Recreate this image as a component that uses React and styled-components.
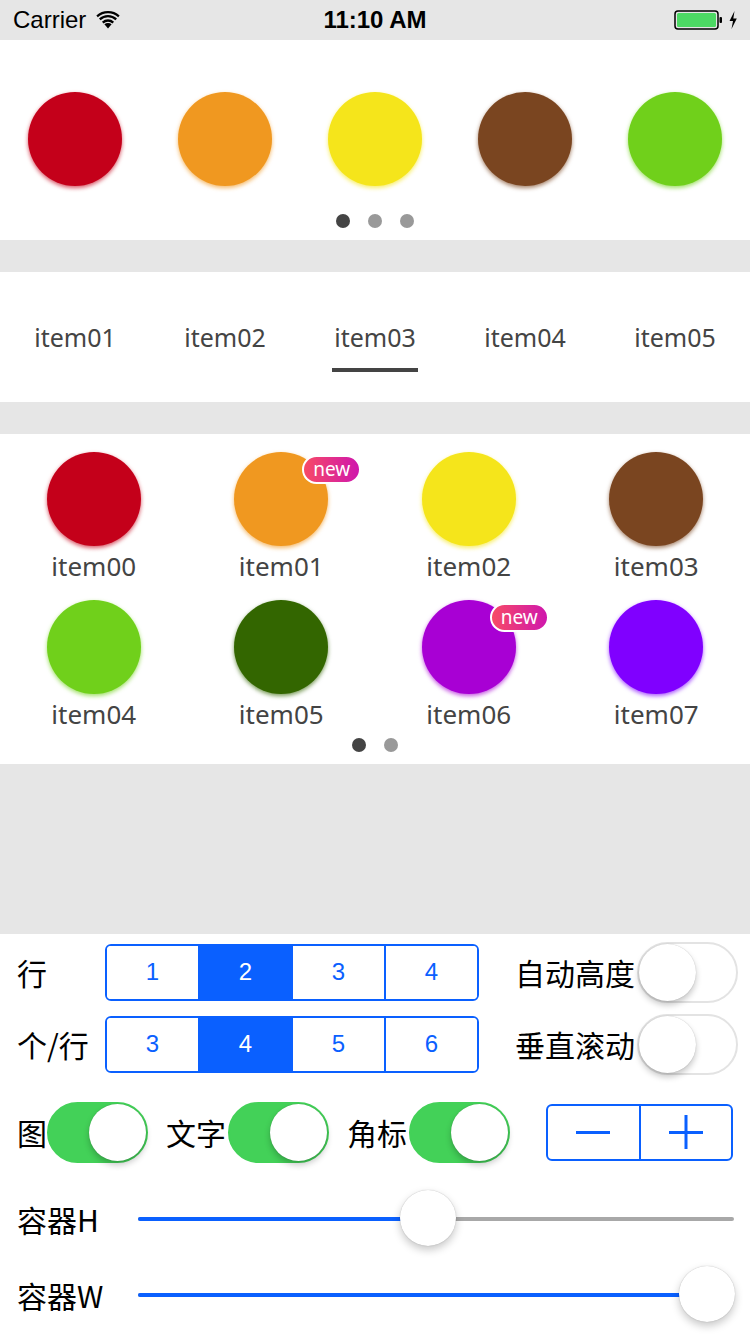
import React from "react";
import styled, { createGlobalStyle } from "styled-components";

const Global = createGlobalStyle`
  html, body { margin: 0; padding: 0; background: #e6e6e6; }
  body { font-family: "Noto Sans", "Noto Sans CJK SC", sans-serif; }
  * { box-sizing: border-box; }
`;

const Page = styled.div`
  width: 750px;
  height: 1334px;
  background: #e6e6e6;
  display: flex;
  flex-direction: column;
  overflow: hidden;
`;

const StatusBar = styled.div`
  height: 40px;
  display: flex;
  align-items: center;
  justify-content: space-between;
  padding: 0 12px 0 13px;
  position: relative;
  font-family: "Liberation Sans", "Noto Sans", sans-serif;
  font-size: 24px;
  color: #000;
`;
const Carrier = styled.div`
  display: flex;
  align-items: center;
  gap: 10px;
`;
const Clock = styled.div`
  position: absolute;
  left: 0;
  right: 0;
  text-align: center;
  font-weight: bold;
  pointer-events: none;
`;
const BatteryWrap = styled.div`
  display: flex;
  align-items: center;
  gap: 4px;
`;

const Section = styled.div`
  background: #fff;
  margin-top: ${(p) => p.$mt || 0}px;
  height: ${(p) => p.$h}px;
  display: flex;
  flex-direction: column;
`;

const BannerRow = styled.div`
  display: grid;
  grid-template-columns: repeat(5, 150px);
  padding-top: 52px;
  justify-items: center;
`;

const Ball = styled.div`
  width: 94px;
  height: 94px;
  border-radius: 50%;
  background: ${(p) => p.$c};
  box-shadow: 0 2px 4px ${(p) => p.$c}aa;
`;

const Dots = styled.div`
  display: flex;
  justify-content: center;
  gap: 18px;
  margin-top: ${(p) => p.$mt}px;
`;
const Dot = styled.span`
  width: 14px;
  height: 14px;
  border-radius: 50%;
  background: ${(p) => (p.$active ? "#444" : "#999")};
`;

const Tabs = styled.div`
  display: grid;
  grid-template-columns: repeat(5, 150px);
  height: 100%;
`;
const Tab = styled.div`
  position: relative;
  display: flex;
  align-items: center;
  justify-content: center;
  font-family: "Noto Sans", sans-serif;
  font-size: 25px;
  color: #444;
  &::after {
    content: "";
    display: ${(p) => (p.$active ? "block" : "none")};
    position: absolute;
    left: 32px;
    right: 32px;
    top: 96px;
    height: 4px;
    background: #444;
  }
`;

const Grid = styled.div`
  display: grid;
  grid-template-columns: repeat(4, 1fr);
  row-gap: 20px;
  padding-top: 18px;
`;
const Cell = styled.div`
  display: flex;
  flex-direction: column;
  align-items: center;
  position: relative;
`;
const Label = styled.div`
  margin-top: 6px;
  height: 28px;
  line-height: 28px;
  font-family: "Noto Sans", sans-serif;
  font-size: 26px;
  color: #444;
`;
const Badge = styled.div`
  position: absolute;
  top: 3px;
  left: calc(50% + 21px);
  height: 29px;
  padding: 0 9px;
  border: 2px solid #fff;
  border-radius: 15px;
  background: linear-gradient(90deg, #f74a66, #cf17ad);
  color: #fff;
  font-family: "Noto Sans", sans-serif;
  font-size: 19px;
  line-height: 24px;
`;

const Panel = styled.div`
  background: #fff;
  flex: 1;
  padding-top: 8px;
  display: flex;
  flex-direction: column;
`;
const Row = styled.div`
  display: flex;
  align-items: center;
  height: ${(p) => p.$h}px;
  margin-top: ${(p) => p.$mt || 0}px;
  padding-left: 17px;
`;
const CnLabel = styled.div`
  font-family: "Noto Sans CJK SC", sans-serif;
  font-size: 30px;
  color: #000;
  white-space: nowrap;
  width: ${(p) => (p.$w ? p.$w + "px" : "auto")};
  flex-shrink: 0;
  margin-right: ${(p) => p.$mr || 0}px;
`;
const Segmented = styled.div`
  display: flex;
  width: 374px;
  height: 57px;
  border: 2px solid #0a60ff;
  border-radius: 6px;
  overflow: hidden;
  margin-right: 36px;
`;
const Seg = styled.div`
  flex: 1;
  display: flex;
  align-items: center;
  justify-content: center;
  font-family: "Liberation Sans", sans-serif;
  font-size: 24px;
  color: ${(p) => (p.$on ? "#fff" : "#0a60ff")};
  background: ${(p) => (p.$on ? "#0a60ff" : "#fff")};
  & + & {
    border-left: 2px solid #0a60ff;
  }
`;

const SwitchTrack = styled.div`
  width: 101px;
  height: 61px;
  border-radius: 31px;
  flex-shrink: 0;
  position: relative;
  background: ${(p) => (p.$on ? "#43d158" : "#fff")};
  border: 2px solid ${(p) => (p.$on ? "#43d158" : "#e3e3e3")};
  margin-right: ${(p) => p.$mr || 0}px;
`;
const Knob = styled.div`
  position: absolute;
  top: 0;
  ${(p) => (p.$on ? "right: 0;" : "left: 0;")}
  width: 57px;
  height: 57px;
  border-radius: 50%;
  background: #fff;
  box-shadow: 0 4px 6px rgba(0, 0, 0, 0.22), 0 0 1px rgba(0, 0, 0, 0.25);
`;

const Stepper = styled.div`
  display: flex;
  width: 187px;
  height: 57px;
  border: 2px solid #0a60ff;
  border-radius: 6px;
  margin-left: 36px;
`;
const StepBtn = styled.div`
  flex: 1;
  display: flex;
  align-items: center;
  justify-content: center;
  & + & {
    border-left: 2px solid #0a60ff;
  }
`;

const SliderTrack = styled.div`
  position: relative;
  width: 596px;
  height: 4px;
  border-radius: 2px;
  background: #a8a8a8;
`;
const SliderFill = styled.div`
  position: absolute;
  left: 0;
  top: 0;
  bottom: 0;
  border-radius: 2px;
  background: #0a60ff;
`;
const Thumb = styled.div`
  position: absolute;
  top: -27px;
  width: 56px;
  height: 56px;
  margin-left: -28px;
  border-radius: 50%;
  background: #fff;
  box-shadow: 0 4px 8px rgba(0, 0, 0, 0.22), 0 0 1px rgba(0, 0, 0, 0.3);
`;

const Switch = ({ on, mr }) => (
  <SwitchTrack $on={on} $mr={mr}>
    <Knob $on={on} />
  </SwitchTrack>
);

const Slider = ({ value }) => (
  <SliderTrack>
    <SliderFill style={{ width: `${value * 100}%` }} />
    <Thumb style={{ left: `${value * 100}%` }} />
  </SliderTrack>
);

const banner = ["#c4001a", "#f09820", "#f5e51b", "#7a4520", "#70d01b"];
const items = [
  ["#c4001a", false],
  ["#f09820", true],
  ["#f5e51b", false],
  ["#7a4520", false],
  ["#70d01b", false],
  ["#336600", false],
  ["#a800d4", true],
  ["#8000ff", false],
];

export default function App() {
  return (
    <Page>
      <Global />
      <StatusBar>
        <Carrier>
          <span>Carrier</span>
          <svg width="24" height="18" viewBox="0 0 22 17">
            <path d="M11 16.5 L7.6 12.6 A5 5 0 0 1 14.4 12.6 Z" fill="#000" />
            <path d="M5.3 10.1 A8.4 8.4 0 0 1 16.7 10.1 L15.2 11.7 A6.2 6.2 0 0 0 6.8 11.7 Z" fill="#000" />
            <path d="M2.5 7.2 A12.4 12.4 0 0 1 19.5 7.2 L18 8.8 A10.2 10.2 0 0 0 4 8.8 Z" fill="#000" />
            <path d="M0 4.3 A16.4 16.4 0 0 1 22 4.3 L20.6 5.9 A14.2 14.2 0 0 0 1.4 5.9 Z" fill="#000" />
          </svg>
        </Carrier>
        <Clock>11:10 AM</Clock>
        <BatteryWrap>
          <svg width="50" height="20" viewBox="0 0 50 20">
            <rect x="1" y="1" width="43" height="18" rx="3" fill="none" stroke="#000" strokeWidth="1.5" />
            <rect x="3" y="3" width="39" height="14" rx="1.5" fill="#4cd964" />
            <rect x="45.5" y="7" width="2.5" height="6" rx="1" fill="#000" />
          </svg>
          <svg width="10" height="20" viewBox="0 0 10 20">
            <path d="M6.5 1 L1.5 11 L5 11 L3.5 19 L8.8 8.5 L5.3 8.5 Z" fill="#000" />
          </svg>
        </BatteryWrap>
      </StatusBar>

      <Section $h={200}>
        <BannerRow>
          {banner.map((c) => (
            <Ball key={c} $c={c} />
          ))}
        </BannerRow>
        <Dots $mt={28}>
          <Dot $active />
          <Dot />
          <Dot />
        </Dots>
      </Section>

      <Section $mt={32} $h={130}>
        <Tabs>
          {["item01", "item02", "item03", "item04", "item05"].map((t) => (
            <Tab key={t} $active={t === "item03"}>
              {t}
            </Tab>
          ))}
        </Tabs>
      </Section>

      <Section $mt={32} $h={330}>
        <Grid>
          {items.map(([c, isNew], i) => (
            <Cell key={i}>
              <Ball $c={c} />
              <Label>item0{i}</Label>
              {isNew && <Badge>new</Badge>}
            </Cell>
          ))}
        </Grid>
        <Dots $mt={10}>
          <Dot $active />
          <Dot />
        </Dots>
      </Section>

      <Section $mt={170} $h={0} />

      <Panel>
        <Row $h={60}>
          <CnLabel $w={88}>行</CnLabel>
          <Segmented>
            {[1, 2, 3, 4].map((n) => (
              <Seg key={n} $on={n === 2}>
                {n}
              </Seg>
            ))}
          </Segmented>
          <CnLabel $mr={2}>自动高度</CnLabel>
          <Switch on={false} />
        </Row>
        <Row $h={60} $mt={12}>
          <CnLabel $w={88}>个/行</CnLabel>
          <Segmented>
            {[3, 4, 5, 6].map((n) => (
              <Seg key={n} $on={n === 4}>
                {n}
              </Seg>
            ))}
          </Segmented>
          <CnLabel $mr={2}>垂直滚动</CnLabel>
          <Switch on={false} />
        </Row>
        <Row $h={62} $mt={27}>
          <CnLabel>图</CnLabel>
          <Switch on mr={18} />
          <CnLabel $mr={2}>文字</CnLabel>
          <Switch on mr={18} />
          <CnLabel $mr={2}>角标</CnLabel>
          <Switch on />
          <Stepper>
            <StepBtn>
              <svg width="34" height="34" viewBox="0 0 34 34">
                <rect x="0" y="16" width="34" height="3" fill="#0a60ff" />
              </svg>
            </StepBtn>
            <StepBtn>
              <svg width="34" height="34" viewBox="0 0 34 34">
                <rect x="0" y="16" width="34" height="3" fill="#0a60ff" />
                <rect x="15.5" y="0" width="3" height="34" fill="#0a60ff" />
              </svg>
            </StepBtn>
          </Stepper>
        </Row>
        <Row $h={60} $mt={26}>
          <CnLabel $w={121}>容器H</CnLabel>
          <Slider value={0.486} />
        </Row>
        <Row $h={60} $mt={16}>
          <CnLabel $w={121}>容器W</CnLabel>
          <Slider value={0.955} />
        </Row>
      </Panel>
    </Page>
  );
}
